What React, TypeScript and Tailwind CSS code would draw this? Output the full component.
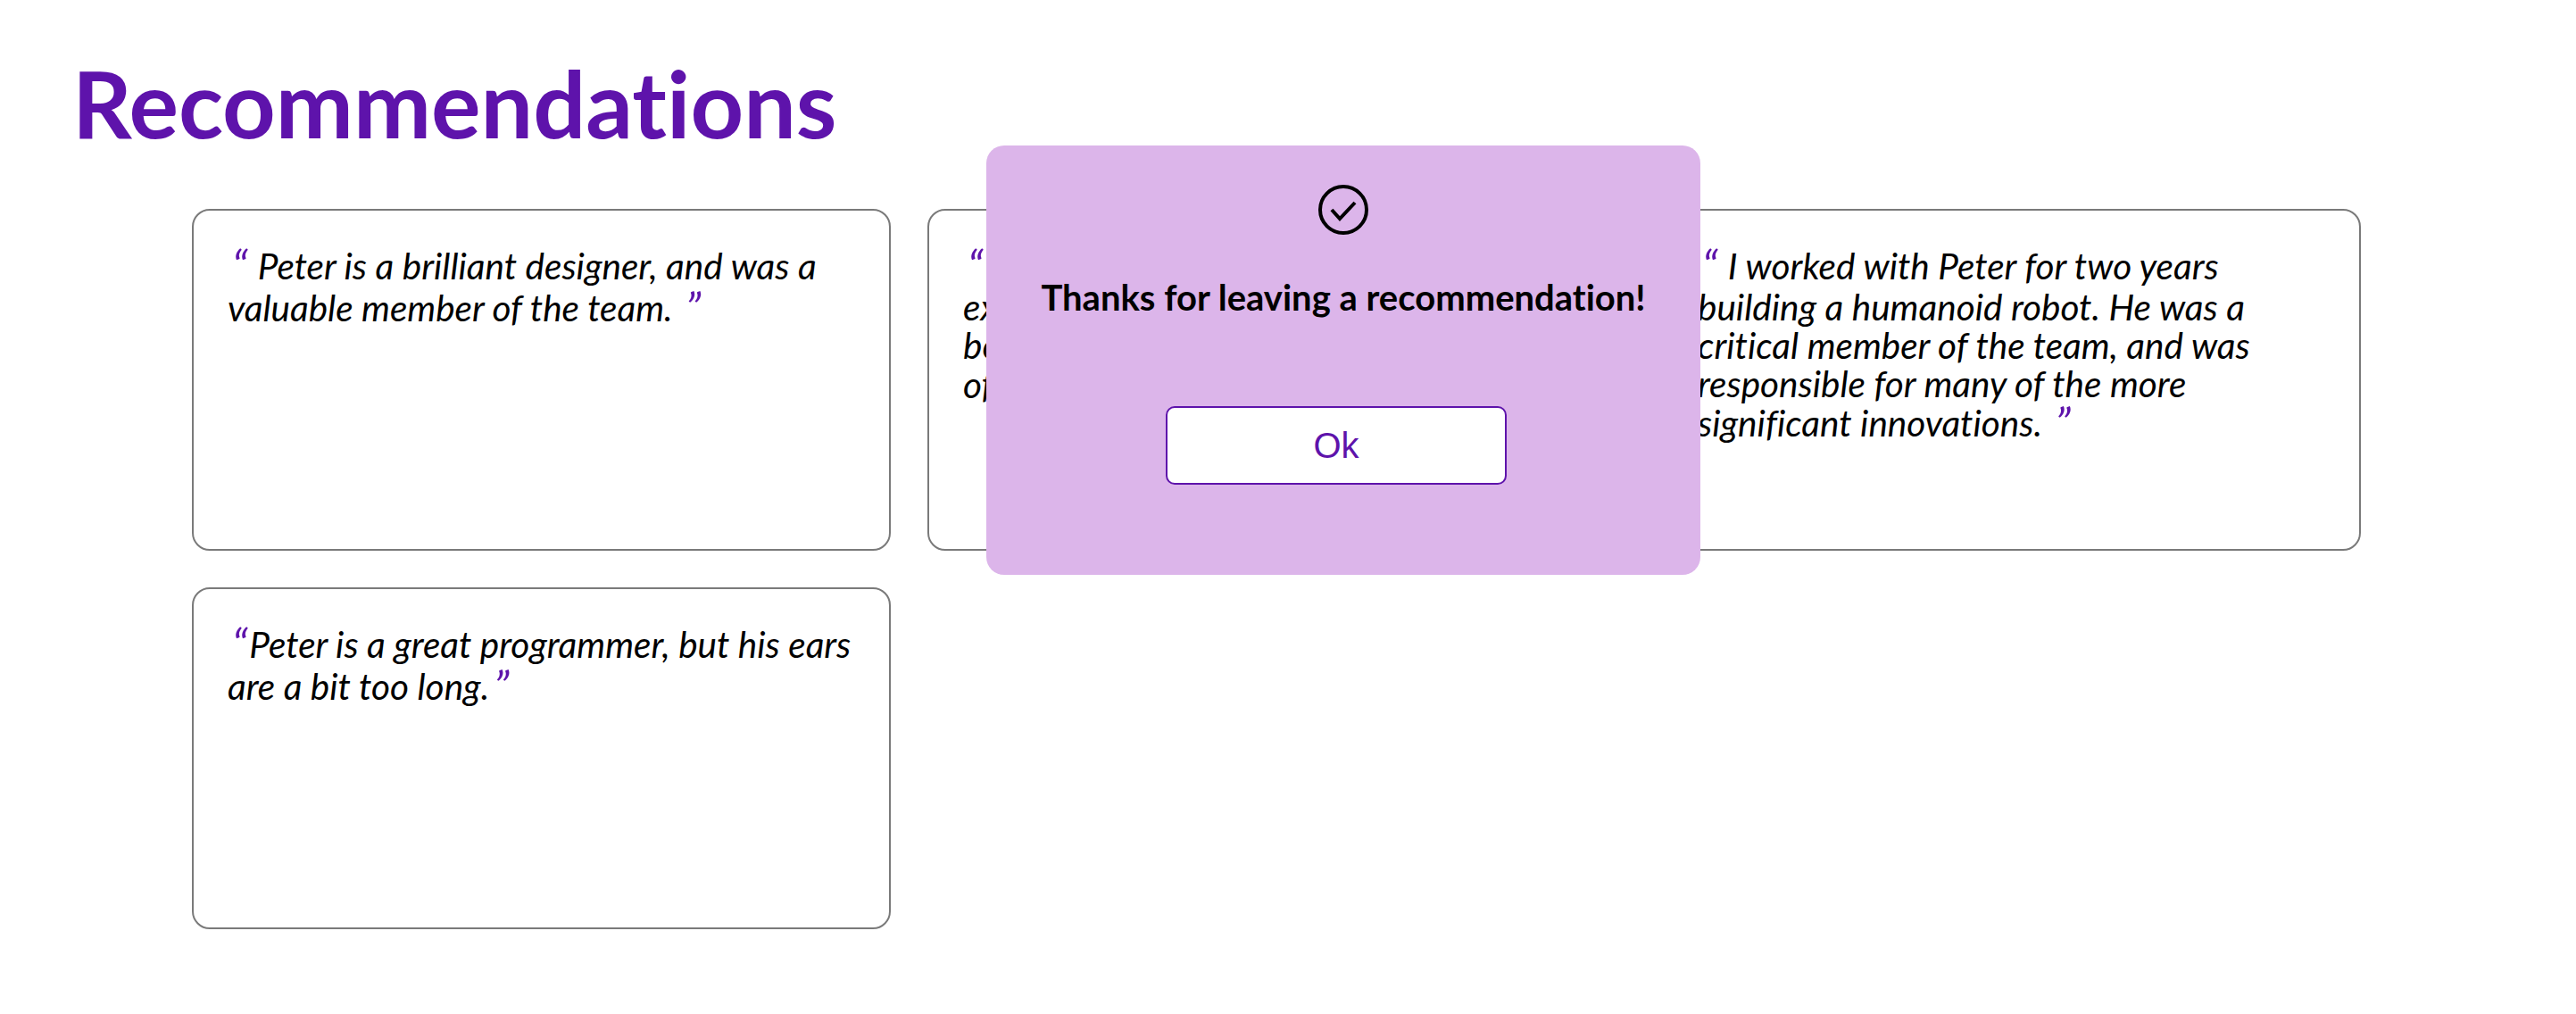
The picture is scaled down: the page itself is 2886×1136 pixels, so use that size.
function OpenQuote() {
  return <span className="ml-[5px] pr-[2px] align-[-4px] text-[50px] leading-[46.5px] text-[#5e13ab]">“</span>;
}

function CloseQuote() {
  return <span className="ml-[5px] align-[-4px] text-[50px] leading-[46.5px] text-[#5e13ab]">”</span>;
}

function Card({ children }: { children: React.ReactNode }) {
  return (
    <div className="h-[383px] rounded-[20px] border-2 border-[#7a7a7a] bg-white pt-[39px] pr-[38px] pl-[38px] text-[40.5px] leading-[43px] italic text-black">
      {children}
    </div>
  );
}

export default function App() {
  return (
    <div className="relative h-[1136px] bg-white font-['Lato',sans-serif] [font-variant-ligatures:none]">
      <h1 className="pt-[56px] pl-[81px] text-[104px] leading-[118px] font-bold text-[#5e13ab]">
        Recommendations
      </h1>
      <div className="mt-[60px] ml-[215px] grid w-[2430px] grid-cols-[783px_782px_783px] gap-x-[41px] gap-y-[41px]">
        <Card>
          <OpenQuote /> Peter is a brilliant designer, and was a valuable member of the team. <CloseQuote />
        </Card>
        <Card>
          <OpenQuote /> Peter is a thoughtful developer with
          <br />
          excellent skills, and he was always
          <br />
          both reliable and kind. He is one
          <br />
          of the best people we know. <CloseQuote />
        </Card>
        <Card>
          <OpenQuote /> I worked with Peter for two years building a humanoid robot. He was a critical member of the team, and was responsible for many of the more significant innovations. <CloseQuote />
        </Card>
        <Card>
          <OpenQuote />Peter is a great programmer, but his ears are a bit too long.<CloseQuote />
        </Card>
      </div>

      <div className="absolute top-[163px] left-[1105px] flex h-[481px] w-[800px] flex-col items-center rounded-[20px] bg-[#dcb5ea]">
        <svg className="mt-[44px]" width="56" height="56" viewBox="0 0 56 56" fill="none" stroke="#000" strokeWidth="4" strokeLinejoin="miter">
          <circle cx="28" cy="28" r="26" />
          <path d="M15 28l9 10 17-18" />
        </svg>
        <h2 className="mt-[47px] text-[40px] leading-[46px] font-bold text-black">
          Thanks for leaving a recommendation!
        </h2>
        <button className="mt-[99px] -ml-[16px] h-[88px] w-[382px] rounded-[10px] border-2 border-[#5e13ab] bg-white font-['Liberation_Sans',sans-serif] text-[40px] text-[#5e13ab]">
          Ok
        </button>
      </div>
    </div>
  );
}
